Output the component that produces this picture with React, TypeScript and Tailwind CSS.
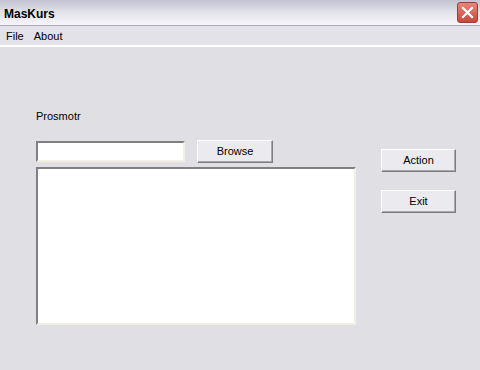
export default function App() {
  const raised =
    "flex items-center justify-center bg-[#ebeaef] text-[11px] text-black border border-t-white border-l-white border-b-[#7d7d80] border-r-[#7d7d80] shadow-[inset_-1px_-1px_0_#a8a8ac]";
  const sunken =
    "bg-white border-2 border-t-[#808080] border-l-[#808080] border-b-[#f1efe2] border-r-[#f1efe2]";

  return (
    <div
      className="w-[480px] h-[370px] bg-[#e0dfe3] flex flex-col overflow-hidden"
      style={{ fontFamily: '"Liberation Sans", Arial, sans-serif' }}>
      {/* title bar */}
      <div className="h-[26px] flex items-center justify-between pl-[4px] pr-[2px] bg-gradient-to-b from-[#c3c3d1] via-[#e2e2ea] to-[#f6f6fa] border-b border-[#a9a9b8]">
        <span className="text-[12px] font-bold text-black pt-[2px]">MasKurs</span>
        <div className="w-[21px] h-[21px] rounded-[3px] bg-gradient-to-b from-[#e8857a] to-[#c8473c] border border-[#a23b33] flex items-center justify-center">
          <svg width="13" height="13" viewBox="0 0 13 13">
            <path d="M2 2 L11 11 M11 2 L2 11" stroke="white" strokeWidth="2.2" strokeLinecap="square" />
          </svg>
        </div>
      </div>

      {/* menu bar */}
      <div className="h-[21px] flex items-center gap-[10px] pl-[6px] pt-[2px] bg-[#e3e2e8] border-b-2 border-white text-[11px] text-black">
        <span>File</span>
        <span>About</span>
      </div>

      {/* body */}
      <div className="flex flex-1">
        <div className="flex flex-col pl-[36px] pt-[63px] w-[356px]">
          <span className="text-[11px] leading-[13px] text-black">Prosmotr</span>
          <div className="flex items-center gap-[12px] mt-[17px] h-[23px]">
            <div className={sunken + " w-[149px] h-[21px]"} />
            <div className={raised + " w-[76px] h-[23px]"}>Browse</div>
          </div>
          <div className={sunken + " mt-[4px] w-[320px] h-[158px]"} />
        </div>
        <div className="flex flex-col ml-[25px] pt-[102px] gap-[18px]">
          <div className={raised + " w-[75px] h-[23px]"}>Action</div>
          <div className={raised + " w-[75px] h-[23px]"}>Exit</div>
        </div>
      </div>
    </div>
  );
}
